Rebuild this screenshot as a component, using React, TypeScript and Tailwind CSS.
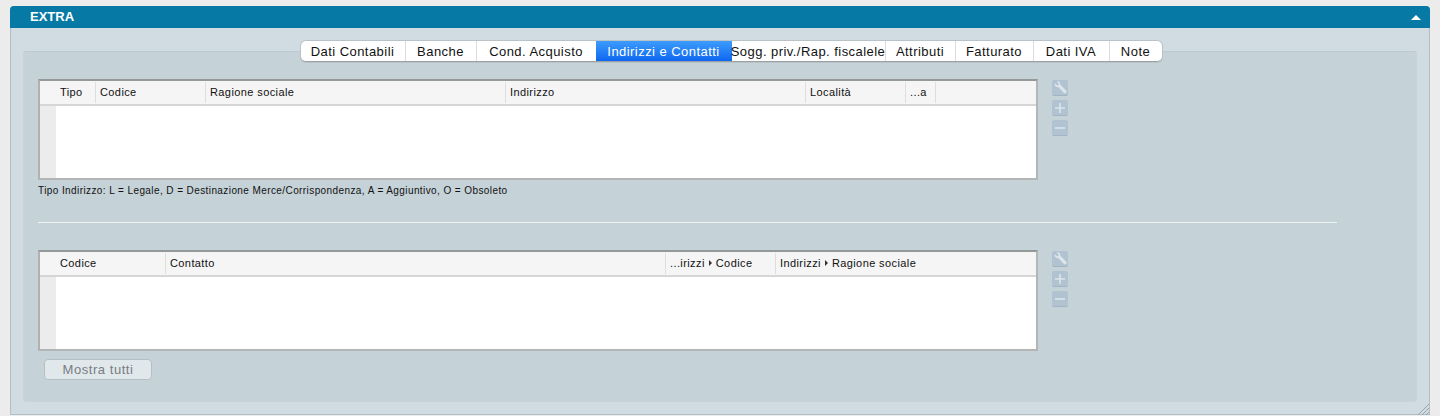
import React from "react";

const ui = "font-['Liberation_Sans',Arial,sans-serif]";

function Tools() {
  const box = "w-4 h-4 rounded-[2px] bg-[#b1c2d1] border-b border-[#a3b5c5] flex items-center justify-center";
  return (
    <div className="flex flex-col gap-1 ml-[14px] mt-[1px]">
      <div className={box}>
        <svg width="15" height="15" viewBox="0 0 14 14" fill="none">
          <path d="M1.6 3 L4.2 5.2 L5.6 4 L3.6 1.4 C5.4 .6 7.2 2.2 6.8 4.2 L12.6 10.2 C13.2 11.4 11.6 13 10.4 12.4 L4.8 6.6 C3 7 1 5.2 1.6 3 Z" fill="#dce5ec" />
        </svg>
      </div>
      <div className={box}>
        <svg width="14" height="14" viewBox="0 0 14 14" fill="none">
          <path d="M7 2v10M2 7h10" stroke="#dce5ec" strokeWidth="1.6" />
        </svg>
      </div>
      <div className={box}>
        <svg width="14" height="14" viewBox="0 0 14 14" fill="none">
          <path d="M2 7h10" stroke="#dce5ec" strokeWidth="1.6" />
        </svg>
      </div>
    </div>
  );
}

function Caret() {
  return <span className="inline-block mx-[4px] mb-[1px] w-0 h-0 border-y-[3px] border-y-transparent border-l-[3px] border-l-[#333]" />;
}

function Grid({ cols }: { cols: { w: string; label: React.ReactNode }[] }) {
  return (
    <div className="w-[1000px] h-[101px] bg-white border-2 border-t-[#93989a] border-r-[#b4b6b6] border-b-[#b4b6b6] border-l-[#b0b2b2] flex flex-col">
      <div className="h-[25px] shrink-0 bg-[#f5f5f5] border-b-2 border-[#d6d6d6] flex items-stretch pl-4">
        {cols.map((c, i) => (
          <div key={i} className={`${c.w} shrink-0 my-[1px] border-r border-[#dedede] pl-1 flex items-center text-[11px] tracking-[0.4px] text-[#111] whitespace-nowrap`}>
            {c.label}
          </div>
        ))}
      </div>
      <div className="flex-1 flex">
        <div className="w-4 bg-[#ececec]" />
        <div className="flex-1 bg-white" />
      </div>
    </div>
  );
}

const tabs = [
  { t: "Dati Contabili", w: "w-[105px]" },
  { t: "Banche", w: "w-[71px]" },
  { t: "Cond. Acquisto", w: "w-[119px]" },
  { t: "Indirizzi e Contatti", w: "w-[136px]", on: true },
  { t: "Sogg. priv./Rap. fiscalele", w: "w-[154px]" },
  { t: "Attributi", w: "w-[70px]" },
  { t: "Fatturato", w: "w-[78px]" },
  { t: "Dati IVA", w: "w-[76px]" },
  { t: "Note", w: "w-[52px]" },
];

export default function App() {
  return (
    <div className={`${ui} h-[416px] overflow-hidden bg-[#ececec] pt-[6px] px-[10px]`}>
      <div className="h-[409px] rounded-t-[4px] bg-[#d0dce2] border-x border-b border-[#b3bfc5] flex flex-col">
        <div className="-mx-px h-[22px] shrink-0 bg-[#0779a5] rounded-t-[4px] flex items-center justify-between pl-5 pr-[9px]">
          <span className="text-[13px] font-bold text-white">EXTRA</span>
          <span className="w-0 h-0 mt-[1px] border-x-[5px] border-x-transparent border-b-[5px] border-b-white" />
        </div>
        <div className="flex-1 px-3 pt-[13px] pb-3 flex flex-col">
          <div className="relative z-10 flex justify-center pl-[22px]">
            <div className="h-[21px] flex rounded-[5px] bg-white border-b border-[#9aa1a5] overflow-hidden shadow-[0_0_0_1px_#b9c2c7]">
              {tabs.map((tab, i) => (
                <div
                  key={tab.t}
                  className={`${tab.w} flex items-center justify-center pt-[1px] text-[13px] tracking-[0.45px] whitespace-nowrap ${
                    tab.on
                      ? "bg-gradient-to-b from-[#3d9bfc] to-[#0d67f0] text-white"
                      : `text-[#111] ${i < tabs.length - 1 && !tabs[i + 1].on ? "border-r border-[#dcdcdc]" : ""}`
                  }`}
                >
                  {tab.t}
                </div>
              ))}
            </div>
          </div>
          <div className="flex-1 -mt-[11px] rounded-[4px] bg-[#c5d2d8] border-t border-[#bcc9cf] pt-[27px] pl-[15px] flex flex-col items-start">
            <div className="flex">
              <Grid
                cols={[
                  { w: "w-[40px]", label: "Tipo" },
                  { w: "w-[110px]", label: "Codice" },
                  { w: "w-[300px]", label: "Ragione sociale" },
                  { w: "w-[300px]", label: "Indirizzo" },
                  { w: "w-[100px]", label: "Località" },
                  { w: "w-[30px]", label: "...a" },
                ]}
              />
              <Tools />
            </div>
            <div className="mt-[4px] h-[13px] leading-[13px] text-[10px] tracking-[0.41px] text-[#111] whitespace-nowrap">
              Tipo Indirizzo: L = Legale, D = Destinazione Merce/Corrispondenza, A = Aggiuntivo, O = Obsoleto
            </div>
            <div className="mt-[25px] w-[1299px] h-px bg-[#eef2f4]" />
            <div className="flex mt-[27px]">
              <Grid
                cols={[
                  { w: "w-[110px]", label: "Codice" },
                  { w: "w-[500px]", label: "Contatto" },
                  { w: "w-[110px]", label: <>...irizzi<Caret />Codice</> },
                  { w: "w-[200px] border-r-0", label: <>Indirizzi<Caret />Ragione sociale</> },
                ]}
              />
              <Tools />
            </div>
            <button className="mt-[8px] ml-[6px] w-[108px] h-[21px] pt-[1px] rounded-[4px] bg-[#e1e8ec] border border-[#b5c0c6] text-[13px] tracking-[0.55px] text-[#777d82] flex items-center justify-center">
              Mostra tutti
            </button>
          </div>
        </div>
      </div>
      <div className="relative">
        <svg className="absolute right-[1px] top-[-12px]" width="12" height="12" viewBox="0 0 12 12">
          <path d="M1 12 L12 1 M5 12 L12 5 M9 12 L12 9" stroke="#9aa5ab" strokeWidth="1" />
        </svg>
      </div>
    </div>
  );
}
